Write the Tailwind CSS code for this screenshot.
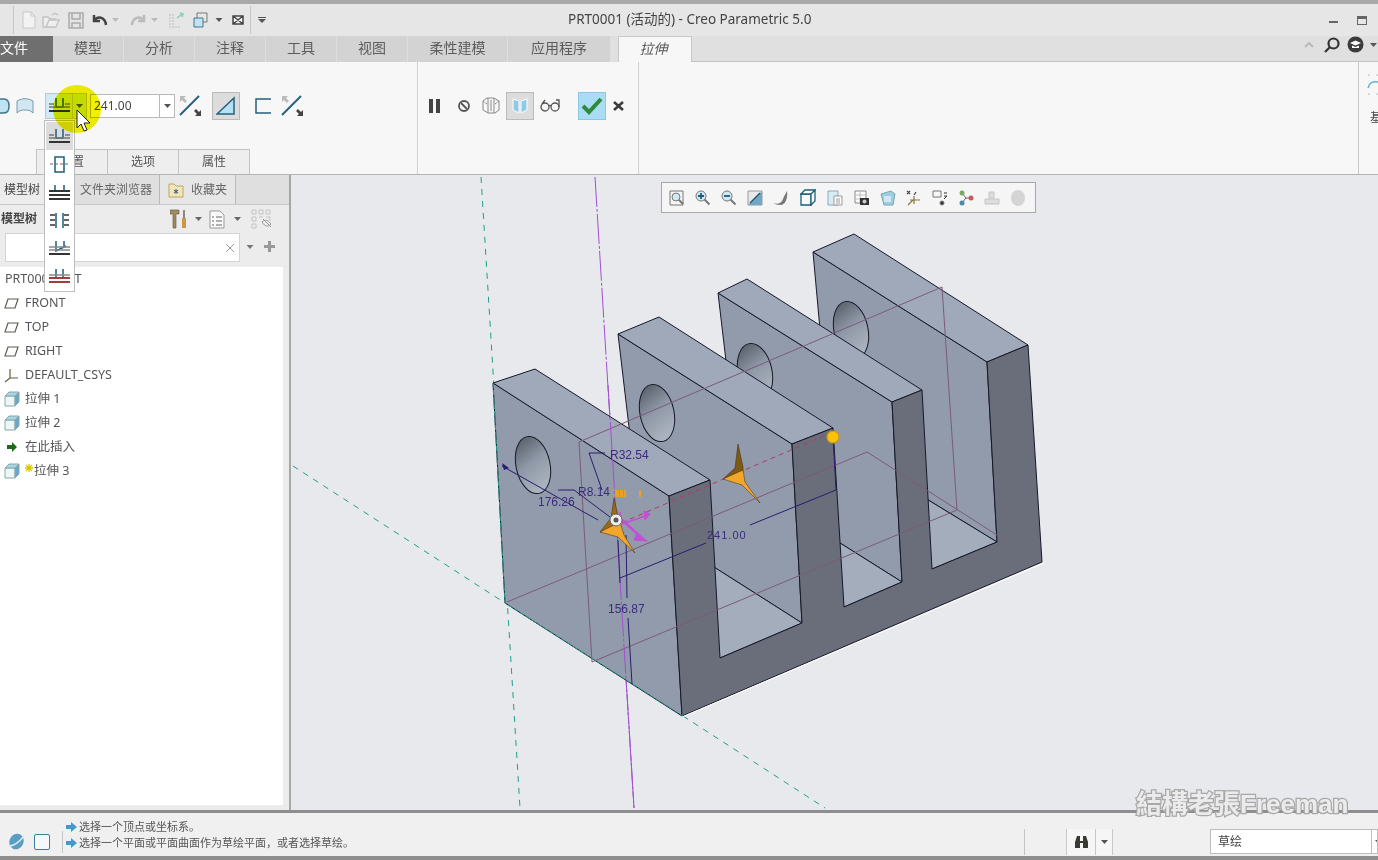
<!DOCTYPE html>
<html lang="zh-CN">
<head>
<meta charset="UTF-8">
<title>PRT0001 (活动的) - Creo Parametric 5.0</title>
<script src="https://cdn.jsdelivr.net/npm/@tailwindcss/browser@4"></script>
</head>
<body class="relative w-[1378px] h-[860px] overflow-hidden flex flex-col bg-[#e8e9ed] text-[#555] font-['Noto_Sans','Noto_Sans_CJK_SC',sans-serif]">

  <!-- top band -->
  <div class="h-1 bg-[#a9a9a9]"></div>

  <!-- title bar -->
  <div class="h-8 flex items-center bg-[#e6e6e6]">
    <div class="w-[568px] flex items-center">
      <div class="ml-[13px] w-px h-7 bg-[#c4c4c4]"></div>
      <svg class="ml-[8px] w-[14px] h-[18px]" viewBox="0 0 14 18" fill="#f2f2f2" stroke="#c8c8c8"><path d="M1 1h8l4 4v12H1z"/><path d="M9 1v4h4" fill="none"/></svg>
      <svg class="ml-[6px] w-[18px] h-[16px]" viewBox="0 0 18 16" fill="#eee" stroke="#c4c4c4" stroke-width="1.5"><path d="M1 15V5h5l2 2h5v8z"/><path d="M4 15l3-7h10l-3 7z"/><path d="M10 3c2-2 4-2 6 0" fill="none"/></svg>
      <svg class="ml-[8px] w-[16px] h-[17px]" viewBox="0 0 16 17" fill="#e4e4e4" stroke="#aaa" stroke-width="1.5"><path d="M1 1h14v15H1z"/><path d="M4 1v6h8V1M4 16v-5h8v5" fill="none"/></svg>
      <svg class="ml-[7px] w-[17px] h-[13px]" viewBox="0 0 17 13" fill="none" stroke="#444" stroke-width="2.5"><path d="M3 1v6h6"/><path d="M3 7c3-5 11-5 12 4"/></svg>
      <svg class="ml-[4px] w-[7px] h-[4px]" viewBox="0 0 7 4" fill="#bbb"><path d="M0 0h7L3.500 4z"/></svg>
      <svg class="ml-[11px] w-[17px] h-[13px]" viewBox="0 0 17 13" fill="none" stroke="#bbb" stroke-width="2.5"><path d="M14 1v6H8"/><path d="M14 7C11 2 3 2 2 11"/></svg>
      <svg class="ml-[4px] w-[7px] h-[4px]" viewBox="0 0 7 4" fill="#bbb"><path d="M0 0h7L3.500 4z"/></svg>
      <svg class="ml-[10px] w-[16px] h-[16px]" viewBox="0 0 16 16" stroke="#bbb" fill="none"><path d="M1 3h6M1 6h6M1 9h6M1 12h6M1 15h12" stroke-dasharray="2 1"/><path d="M9 6l5-4M12 1l3 1-1 3" stroke="#8cb" stroke-width="1.500"/></svg>
      <svg class="ml-[9px] w-[16px] h-[16px]" viewBox="0 0 16 16" fill="none" stroke="#777"><path d="M4 1h10v9H4z"/><path d="M1 6h9v9H1z" fill="#bfe3f2" stroke="#44748c"/></svg>
      <svg class="ml-[6px] w-[8px] h-[4px]" viewBox="0 0 7 4" fill="#555"><path d="M0 0h7L3.500 4z"/></svg>
      <svg class="ml-[9px] w-[12px] h-[10px]" viewBox="0 0 12 10" fill="#f5f5f5" stroke="#444" stroke-width="1.500"><path d="M1 1h10v8H1zM1 1l10 8M11 1L1 9"/></svg>
      <div class="ml-[6px] w-px h-7 bg-[#c4c4c4]"></div>
      <svg class="ml-[7px] w-[8px] h-[6px]" viewBox="0 0 8 6" fill="#555"><path d="M0 0h8v1H0zM0 2h8L4 6z"/></svg>
    </div>
    <div class="text-[13.5px] text-[#444] pb-[2px]">PRT0001 (活动的) - Creo Parametric 5.0</div>
    <div class="flex-1"></div>
    <div class="w-[9px] h-[2px] bg-[#666] mt-[4px]"></div>
    <div class="ml-[19px] mr-[11px] w-[10px] h-[9px] border border-[#666] border-t-[3px]"></div>
  </div>

  <!-- tabs -->
  <div class="h-[26px] flex items-stretch bg-[#e0e0e0] text-[14px] text-[#5c5c5c]">
    <div class="w-[53px] bg-[#6f6f6f] text-white flex items-center pb-[3px] overflow-hidden"><span>文件</span></div>
    <div class="w-[71px] bg-[#d3d3d3] border-r border-[#dedede] flex items-center justify-center pb-[3px]">模型</div>
    <div class="w-[71px] bg-[#d3d3d3] border-r border-[#dedede] flex items-center justify-center pb-[3px]">分析</div>
    <div class="w-[71px] bg-[#d3d3d3] border-r border-[#dedede] flex items-center justify-center pb-[3px]">注释</div>
    <div class="w-[71px] bg-[#d3d3d3] border-r border-[#dedede] flex items-center justify-center pb-[3px]">工具</div>
    <div class="w-[71px] bg-[#d3d3d3] border-r border-[#dedede] flex items-center justify-center pb-[3px]">视图</div>
    <div class="w-[100px] bg-[#d3d3d3] border-r border-[#dedede] flex items-center justify-center pb-[3px]">柔性建模</div>
    <div class="w-[102px] bg-[#d3d3d3] flex items-center justify-center pb-[3px]">应用程序</div>
    <div class="ml-[8px] w-[74px] bg-[#f7f7f7] border-t border-x border-[#c8c8c8] flex items-center justify-center italic pb-[3px] pr-[3px]">拉伸</div>
    <div class="flex-1 flex items-center justify-end border-b border-[#c4c4c4] pb-[8px]">
      <svg class="w-[10px] h-[7px]" viewBox="0 0 10 7" fill="none" stroke="#bbb" stroke-width="2"><path d="M1 6l4-4 4 4"/></svg>
      <svg class="ml-[10px] w-[16px] h-[16px]" viewBox="0 0 16 16" fill="none" stroke="#333" stroke-width="2.200"><circle cx="9.500" cy="6.500" r="5"/><path d="M6 10l-5 5"/></svg>
      <svg class="ml-[7px] w-[17px] h-[17px]" viewBox="0 0 17 17"><circle cx="8.500" cy="8.500" r="8" fill="#3c3c3c"/><path d="M3 7l5.500-2.500L14 7l-5.500 2.500z" fill="#fff"/><path d="M5 9.500v2.500h7V9.500l-3.500 1.500z" fill="#fff"/></svg>
      <svg class="ml-[6px] mr-[1px] w-[7px] h-[4px]" viewBox="0 0 7 4" fill="#555"><path d="M0 0h7L3.500 4z"/></svg>
    </div>
  </div>

  <!-- ribbon -->
  <div class="h-[113px] flex bg-[#f7f7f7] border-b border-[#b4b4b4]">
    <div class="w-[418px] flex flex-col border-r border-[#d0d0d0]">
      <div class="h-[87px] flex items-center">
        <svg class="w-[10px] h-[18px]" viewBox="0 0 10 18" fill="#bfe3f2" stroke="#44748c" stroke-width="1.500"><path d="M-4 2h8c4 0 5 3 5 7s-1 7-5 7h-8z"/></svg>
        <svg class="ml-[6px] w-[18px] h-[16px]" viewBox="0 0 18 16" fill="#cfe8f4" stroke="#7c98a8"><path d="M1 3c5-3 11-3 16 0v12c-3-3-5-3-8-3s-5 0-8 3z"/></svg>
        <div class="ml-[11px] w-[42px] h-[26px] flex border border-[#c4c4c4] bg-[#cfeafa]">
          <div class="w-[26px] flex items-center justify-center">
            <svg class="w-[21px] h-[17px]" viewBox="0 0 21 17" fill="none" stroke-width="1.500"><path d="M7 1v9h7V1" stroke="#1d5f7a"/><path d="M0 7h5M16 7h5M0 10h21" stroke="#777"/><path d="M0 14h21" stroke="#333" stroke-width="2"/></svg>
          </div>
          <div class="flex-1 border-l border-[#c4c4c4] flex items-center justify-center">
            <svg class="w-[7px] h-[4px]" viewBox="0 0 7 4" fill="#555"><path d="M0 0h7L3.500 4z"/></svg>
          </div>
        </div>
        <div class="ml-[3px] w-[85px] h-[24px] flex border border-[#b9b9b9] bg-white text-[12px] text-[#444]">
          <div class="flex-1 pl-[3px] leading-[22px]">241.00</div>
          <div class="w-[15px] border-l border-[#b9b9b9] flex items-center justify-center">
            <svg class="w-[7px] h-[4px]" viewBox="0 0 7 4" fill="#555"><path d="M0 0h7L3.500 4z"/></svg>
          </div>
        </div>
        <svg class="ml-[4px] w-[23px] h-[22px]" viewBox="0 0 23 22" fill="none"><path d="M1 20L20 1" stroke="#2a5f7a" stroke-width="2"/><path d="M1 1h6l-2 2 3 3-2 2-3-3-2 2z" fill="#bbb"/><path d="M22 21h-6l2-2-3-3 2-2 3 3 2-2z" fill="#444"/></svg>
        <div class="ml-[10px] w-[28px] h-[28px] bg-[#dcdcdc] border border-[#bbb] flex items-center justify-center">
          <svg class="w-[20px] h-[19px]" viewBox="0 0 20 19"><path d="M1 18L18 2v16z" fill="#b5e2f6" stroke="#2a5f7a" stroke-width="1.500"/></svg>
        </div>
        <svg class="ml-[15px] w-[16px] h-[16px]" viewBox="0 0 16 16" fill="none" stroke="#2a5f7a" stroke-width="1.500"><path d="M16 1H1v14h15"/></svg>
        <svg class="ml-[10px] w-[23px] h-[22px]" viewBox="0 0 23 22" fill="none"><path d="M1 20L20 1" stroke="#2a5f7a" stroke-width="2"/><path d="M1 1h6l-2 2 3 3-2 2-3-3-2 2z" fill="#bbb"/><path d="M22 21h-6l2-2-3-3 2-2 3 3 2-2z" fill="#444"/></svg>
      </div>
      <div class="h-[25px] flex ml-[36px] text-[12px] text-[#555]">
        <div class="w-[72px] border border-b-0 border-[#c4c4c4] bg-[#eeeeee] flex items-center justify-center">放置</div>
        <div class="w-[71px] border-t border-r border-[#c4c4c4] bg-[#eeeeee] flex items-center justify-center">选项</div>
        <div class="w-[71px] border-t border-r border-[#c4c4c4] bg-[#eeeeee] flex items-center justify-center">属性</div>
      </div>
    </div>
    <div class="w-[220px] h-[87px] flex items-center border-r border-[#d0d0d0] box-content pb-[25px]">
      <svg class="ml-[10px] w-[13px] h-[14px]" viewBox="0 0 13 14" fill="#444"><path d="M1 0h4v14H1zM8 0h4v14H8z"/></svg>
      <svg class="ml-[17px] w-[12px] h-[12px]" viewBox="0 0 12 12" fill="none" stroke="#555" stroke-width="1.800"><circle cx="6" cy="6" r="5"/><path d="M3 3l6 6"/></svg>
      <svg class="ml-[12px] w-[18px] h-[17px]" viewBox="0 0 18 17" fill="none" stroke="#888"><path d="M1 4l4-3h7l5 3v9l-4 3H6l-5-3z"/><path d="M6 1v15M12 1v15M9 3v11"/><path d="M1 4l4 3M17 4l-4 3" stroke-dasharray="2 1"/></svg>
      <div class="ml-[6px] w-[28px] h-[28px] bg-[#dcdcdc] border border-[#bbb] flex items-center justify-center">
        <svg class="w-[16px] h-[17px]" viewBox="0 0 16 17" fill="#8fcbe8" stroke="#fff"><path d="M1 2l6 2v12l-6-3zM15 2L9 4v12l6-3z"/></svg>
      </div>
      <svg class="ml-[6px] w-[20px] h-[13px]" viewBox="0 0 20 13" fill="none" stroke="#555" stroke-width="1.300"><circle cx="5" cy="8" r="4"/><circle cx="15" cy="8" r="4"/><path d="M9 7c1-1 1-1 2 0M2 5l3-4M19 8V1h-3"/></svg>
      <div class="ml-[18px] w-[28px] h-[28px] bg-[#a9dcf5] border border-[#8cc8e6] flex items-center justify-center">
        <svg class="w-[22px] h-[18px]" viewBox="0 0 22 18" fill="none" stroke="#2f8a3a" stroke-width="4"><path d="M2 9l6 6L20 2"/></svg>
      </div>
      <svg class="ml-[7px] w-[11px] h-[10px]" viewBox="0 0 11 10" fill="none" stroke="#3a3a3a" stroke-width="2.500"><path d="M1 1l9 8M10 1L1 9"/></svg>
    </div>
    <div class="w-[720px] border-r border-[#c8c8c8]"></div>
    <div class="flex-1 flex flex-col overflow-hidden">
      <svg class="mt-[10px] ml-[8px] w-[12px] h-[26px]" viewBox="0 0 12 26" fill="none"><path d="M1 16c1-5 5-7 10-6" stroke="#59b0d8" stroke-width="1.500"/><path d="M2 3h.01M10 3h.01M2 22h.01M10 22h.01" stroke="#777" stroke-width="1.200" stroke-linecap="round"/></svg>
      <div class="ml-[11px] mt-[11px] text-[12px] text-[#444] whitespace-nowrap">基</div>
    </div>
  </div>

  <!-- main -->
  <div class="h-[635px] flex">
    <!-- left panel -->
    <div class="w-[291px] flex flex-col bg-[#ececec] border-r-2 border-[#a6a6a6]">
      <div class="h-[30px] flex text-[12px] bg-[#dfdfdf] border-b border-[#c8c8c8]">
        <div class="w-[44px] bg-[#ececec] pl-1 flex items-center text-[#444] whitespace-nowrap">模型树</div>
        <div class="w-[116px] pl-[36px] border-r border-[#b9b9b9] flex items-center text-[#666] whitespace-nowrap">文件夹浏览器</div>
        <div class="w-[76px] pl-[8px] border-r border-[#b9b9b9] flex items-center text-[#666] bg-[#e6e6e6]">
          <svg class="w-[16px] h-[16px]" viewBox="0 0 16 16"><path d="M1 2h5l2 2h7v11H1z" fill="#f5e6b8" stroke="#b9a56a"/><path d="M8 7v5M5.800 8.200l4.400 2.600M10.200 8.200l-4.400 2.600" stroke="#2a5f7a"/></svg>
          <span class="ml-[7px] whitespace-nowrap">收藏夹</span>
        </div>
      </div>
      <div class="h-[28px] flex items-center">
        <div class="w-[170px] pl-px text-[12px] font-bold text-[#444]">模型树</div>
        <svg class="w-[17px] h-[20px]" viewBox="0 0 17 20"><path d="M0 1h9v4H6v14H3V5H0z" fill="#a58b5a" stroke="#555" stroke-width=".6"/><path d="M14 1v8" stroke="#666" stroke-width="1.500"/><path d="M12 9h4v10h-4z" fill="#c99a45"/></svg>
        <svg class="ml-[8px] w-[7px] h-[4px]" viewBox="0 0 7 4" fill="#666"><path d="M0 0h7L3.500 4z"/></svg>
        <svg class="ml-[7px] w-[16px] h-[19px]" viewBox="0 0 16 19" fill="#fafafa" stroke="#999"><path d="M1 1h10l4 4v13H1z"/><path d="M7 7h6M7 11h6M7 15h6M3 7h2M3 11h2M3 15h2" stroke="#666"/></svg>
        <svg class="ml-[9px] w-[7px] h-[4px]" viewBox="0 0 7 4" fill="#666"><path d="M0 0h7L3.500 4z"/></svg>
        <svg class="ml-[10px] w-[21px] h-[20px]" viewBox="0 0 21 20" fill="none" stroke="#c4c4c4"><path d="M1 1h4v4H1zM1 8h4v4H1zM1 15h4v4H1zM8 1h4v4H8zM15 1h4v4h-4zM8 8h4M15 8h4v4"/><path d="M11 13c3-3 6-2 9 2-3 3-6 3-9-2zM12 10l8 8" stroke="#999"/></svg>
      </div>
      <div class="h-[29px] flex items-center">
        <div class="ml-[5px] w-[235px] h-[29px] bg-white border border-[#d4d4d4] flex items-center justify-end pr-[5px]">
          <svg class="w-[8px] h-[8px]" viewBox="0 0 8 8" fill="none" stroke="#999"><path d="M0 0l8 8M8 0L0 8"/></svg>
        </div>
        <svg class="ml-[6px] mb-[2px] w-[8px] h-[4px]" viewBox="0 0 7 4" fill="#777"><path d="M0 0h7L3.500 4z"/></svg>
        <svg class="ml-[10px] mb-[2px] w-[11px] h-[11px]" viewBox="0 0 11 11" fill="#999"><path d="M4 0h3v4h4v3H7v4H4V7H0V4h4z"/></svg>
      </div>
      <div class="mt-[5px] h-[538px] w-[283px] bg-white text-[12.5px] text-[#555]">
        <div class="h-6 flex items-center pl-[5px]">PRT0001.PRT</div>
        <div class="h-6 flex items-center pl-1">
          <svg class="w-[15px] h-[11px]" viewBox="0 0 15 11" fill="none" stroke="#5c5c50" stroke-width="1.200"><path d="M4 1h10l-3 9H1z"/></svg>
          <span class="ml-[6px]">FRONT</span>
        </div>
        <div class="h-6 flex items-center pl-1">
          <svg class="w-[15px] h-[11px]" viewBox="0 0 15 11" fill="none" stroke="#5c5c50" stroke-width="1.200"><path d="M4 1h10l-3 9H1z"/></svg>
          <span class="ml-[6px]">TOP</span>
        </div>
        <div class="h-6 flex items-center pl-1">
          <svg class="w-[15px] h-[11px]" viewBox="0 0 15 11" fill="none" stroke="#5c5c50" stroke-width="1.200"><path d="M4 1h10l-3 9H1z"/></svg>
          <span class="ml-[6px]">RIGHT</span>
        </div>
        <div class="h-6 flex items-center pl-1">
          <svg class="w-[15px] h-[15px]" viewBox="0 0 15 15" fill="none" stroke="#6a5a3c" stroke-width="1.200"><path d="M6 1v9l8-0M6 10l-5 4"/></svg>
          <span class="ml-[6px]">DEFAULT_CSYS</span>
        </div>
        <div class="h-6 flex items-center pl-1">
          <svg class="w-[16px] h-[16px]" viewBox="0 0 16 16"><path d="M1 5h10v10H1z" fill="#eef6fa" stroke="#8aa"/><path d="M1 5l4-4h10l-4 4z" fill="#a9d4e8" stroke="#8aa"/><path d="M11 5l4-4v10l-4 4z" fill="#6ba8c6" stroke="#8aa"/></svg>
          <span class="ml-[5px]">拉伸 1</span>
        </div>
        <div class="h-6 flex items-center pl-1">
          <svg class="w-[16px] h-[16px]" viewBox="0 0 16 16"><path d="M1 5h10v10H1z" fill="#eef6fa" stroke="#8aa"/><path d="M1 5l4-4h10l-4 4z" fill="#a9d4e8" stroke="#8aa"/><path d="M11 5l4-4v10l-4 4z" fill="#6ba8c6" stroke="#8aa"/></svg>
          <span class="ml-[5px]">拉伸 2</span>
        </div>
        <div class="h-6 flex items-center pl-[7px]">
          <svg class="w-[10px] h-[10px]" viewBox="0 0 10 10" fill="#1f6a1a"><path d="M0 3h5V0l5 5-5 5V7H0z"/></svg>
          <span class="ml-[8px]">在此插入</span>
        </div>
        <div class="h-6 flex items-center pl-1">
          <svg class="w-[16px] h-[16px]" viewBox="0 0 16 16"><path d="M1 5h10v10H1z" fill="#eef6fa" stroke="#8aa"/><path d="M1 5l4-4h10l-4 4z" fill="#a9d4e8" stroke="#8aa"/><path d="M11 5l4-4v10l-4 4z" fill="#6ba8c6" stroke="#8aa"/></svg>
          <svg class="ml-[5px] mb-[6px] w-[8px] h-[8px]" viewBox="0 0 8 8" stroke="#d8c800" stroke-width="1.300"><path d="M4 0v8M0 4h8M1 1l6 6M7 1L1 7"/></svg>
          <span class="ml-[1px]">拉伸 3</span>
        </div>
      </div>
    </div>

    <!-- graphics area -->
    <div class="relative flex-1 bg-[#e8e9ed]">
      <svg class="absolute inset-0 w-full h-full" viewBox="291 175 1087 635" font-family="Liberation Sans, sans-serif">
        <defs>
          <linearGradient id="hole" x1="0" y1="0" x2="0.300" y2="1">
            <stop offset="0" stop-color="#4f5661"/>
            <stop offset="0.550" stop-color="#8f98a6"/>
            <stop offset="1" stop-color="#aab2bf"/>
          </linearGradient>
        </defs>

        <!-- datum axes behind the part -->
        <g fill="none" stroke="#1f9f8a" stroke-width="1" stroke-dasharray="6 6">
          <path d="M481 177L520 808"/>
          <path d="M293 466L505 603"/>
          <path d="M683 716L825 808"/>
        </g>
        <path d="M595 177L634 808" fill="none" stroke="#a050d0" stroke-width="1" stroke-dasharray="30 2 3 2"/>

        <!-- plate 4 -->
        <g stroke="#16182a" stroke-width="1" stroke-linejoin="round">
          <path d="M813 252L987 362L997 542L830 440z" fill="#929bab"/>
          <path d="M830 440L997 542L932 569L800 500z" fill="#a4adbc"/>
          <ellipse cx="851" cy="330" rx="17" ry="29" fill="url(#hole)" transform="rotate(-12 851 330)"/>
          <path d="M813 252L854 234L1028 345L987 362z" fill="#a0a9b9"/>
          <!-- plate 3 -->
          <path d="M718 293L892 402L902 582L740 480z" fill="#929bab"/>
          <path d="M740 480L902 582L844 607L720 530z" fill="#a4adbc"/>
          <ellipse cx="755" cy="372" rx="17" ry="29" fill="url(#hole)" transform="rotate(-12 755 372)"/>
          <path d="M718 293L747 279L922 390L892 402z" fill="#a0a9b9"/>
          <!-- plate 2 -->
          <path d="M618 334L792 444L802 623L640 520z" fill="#929bab"/>
          <path d="M640 520L802 623L720 658L620 600z" fill="#a4adbc"/>
          <ellipse cx="657" cy="413" rx="17" ry="29" fill="url(#hole)" transform="rotate(-12 657 413)"/>
          <path d="M618 334L659 317L833 428L792 444z" fill="#a0a9b9"/>
          <!-- plate 1 -->
          <path d="M493 383L669 496L682 716L505 603z" fill="#929bab"/>
          <ellipse cx="533" cy="465" rx="17" ry="29" fill="url(#hole)" transform="rotate(-12 533 465)"/>
          <path d="M493 383L535 369L710 480L669 496z" fill="#a0a9b9"/>
          <!-- dark u profile -->
          <path d="M669 496L710 480L720 658L802 623L792 444L833 428L844 607L902 582L892 402L922 390L932 569L997 542L987 362L1028 345L1042 562L682 716z" fill="#6a6e7b"/>
        </g>
        <path d="M682 717L1044 563" stroke="#fff" stroke-width="1"/>

        <!-- sketch plane outline -->
        <g fill="none" stroke="#7c5a78" stroke-width="1">
          <path d="M942 287L579 442L592 662L957 510z"/>
          <path d="M507 602L867 452L997 535"/>
        </g>

        <!-- edges of datum on the part -->
        <path d="M493 383L505 603L683 716" fill="none" stroke="#1f9f8a" stroke-width="1" stroke-dasharray="5 2"/>
        <path d="M608 385L634 808" fill="none" stroke="#a050d0" stroke-width="1" stroke-dasharray="30 2 3 2"/>
        <path d="M833 432L600 532" fill="none" stroke="#b23a62" stroke-width="1" stroke-dasharray="5 4"/>

        <!-- dimensions -->
        <g fill="none" stroke="#2a1c70" stroke-width="1">
          <path d="M833 437L836 490"/>
          <path d="M836 490L750 525"/>
          <path d="M706 543L620 578"/>
          <path d="M618 540L620 583"/>
          <path d="M626 535L627 598"/>
          <path d="M628 618L632 684"/>
          <path d="M502 466L598 520"/>
          <path d="M589 453h16M589 453L602 490"/>
          <path d="M558 490h16M574 490L610 517"/>
        </g>
        <path d="M502 463L509 468L504 470z" fill="#2a1c70"/>
        <g fill="#3a2a80" font-size="12">
          <text x="610" y="459">R32.54</text>
          <text x="578" y="496">R8.14</text>
          <text x="538" y="506">176.26</text>
          <text x="707" y="539" font-size="11" letter-spacing="1">241.00</text>
          <text x="608" y="613">156.87</text>
        </g>
        <g fill="#f0a020">
          <path d="M615 490h4v7h-4zM620 490h3v7h-3zM624 490h2v7h-2zM639 490h2v7h-2z"/>
        </g>

        <!-- drag point -->
        <circle cx="833" cy="437" r="6" fill="#fcc20a" stroke="#c79a1e" stroke-width="1.200"/>

        <!-- coordinate stars -->
        <g stroke="#3a2a10" stroke-width=".5">
          <path d="M738 444L735 468L723 479L743 472L743 467z" fill="#7c5a16"/>
          <path d="M723 479L743 470L745 482L760 503L742 485z" fill="#f2a62a"/>
          <path d="M614 498L611 518L600 532L620 524L618 516z" fill="#9a6a18"/>
          <path d="M600 532L620 522L624 535L635 553L618 537z" fill="#f2a62a"/>
        </g>
        <g stroke="#c24fd6" fill="#c24fd6">
          <path d="M622 524L648 515" stroke-width="1.500"/>
          <path d="M644 511L650 514L645 520z"/>
          <path d="M622 520L642 538" stroke-width="2.500"/>
          <path d="M637 533L647 541L634 540z"/>
          <path d="M620 512L622 522" stroke-width="1.500"/>
        </g>
        <circle cx="616" cy="520" r="6" fill="#eeeeee" stroke="#666"/>
        <circle cx="616" cy="520" r="2.500" fill="#555"/>
      </svg>

      <!-- view toolbar -->
      <div class="absolute left-[370px] top-[7px] w-[375px] h-[31px] bg-[#f5f5f5] border border-[#a8a8a8] flex items-center pl-[7px] gap-[10px]">
        <svg class="w-[16px] h-[16px]" viewBox="0 0 16 16" fill="none" stroke="#777"><path d="M1 1h13v14H1z"/><circle cx="7" cy="7" r="4" fill="#cfe8f4"/><path d="M10 10l4 4" stroke-width="2"/></svg>
        <svg class="w-[16px] h-[16px]" viewBox="0 0 16 16" fill="none" stroke="#777"><circle cx="6" cy="6" r="5" fill="#cfe8f4"/><path d="M9.500 9.500l5 5" stroke-width="2"/><path d="M3 6h6M6 3v6" stroke="#1d5f7a" stroke-width="1.800"/></svg>
        <svg class="w-[16px] h-[16px]" viewBox="0 0 16 16" fill="none" stroke="#777"><circle cx="6" cy="6" r="5" fill="#cfe8f4"/><path d="M9.500 9.500l5 5" stroke-width="2"/><path d="M3 6h6" stroke="#1d5f7a" stroke-width="1.800"/></svg>
        <svg class="w-[16px] h-[16px]" viewBox="0 0 16 16"><path d="M1 1h14v14H1z" fill="#e8e8e8" stroke="#999"/><path d="M1 15L15 1v14z" fill="#6ea9c6"/><path d="M3 13L13 3" stroke="#1d4f6a" stroke-width="1.300"/></svg>
        <svg class="w-[16px] h-[16px]" viewBox="0 0 16 16"><path d="M1 13c5 2 8-1 9-4s3-6 4-8c1 6-1 14-7 14-3 0-5-1-6-2z" fill="#777"/></svg>
        <svg class="ml-px w-[16px] h-[17px]" viewBox="0 0 16 17" fill="#fafafa" stroke="#1d5f7a" stroke-width="1.300"><path d="M1 5h10v11H1z"/><path d="M1 5l4-4h10l-4 4zM11 5l4-4v11l-4 4z"/></svg>
        <svg class="ml-px w-[16px] h-[16px]" viewBox="0 0 16 16" stroke="#8ab"><path d="M1 1h10v14H1z" fill="#d8ecf5"/><path d="M7 6h8v9H7z" fill="#fff" stroke="#999"/><path d="M9 9h4M9 11h4M9 13h4" stroke="#999"/></svg>
        <svg class="ml-px w-[16px] h-[16px]" viewBox="0 0 16 16"><path d="M1 1h11v12H1z" fill="#fff" stroke="#888"/><path d="M1 5h11M1 9h11M6 1v12" stroke="#bbb"/><path d="M6 8h9v7H6z" fill="#333"/><circle cx="10.500" cy="11.500" r="2" fill="#ccc"/></svg>
        <svg class="w-[16px] h-[16px]" viewBox="0 0 16 16"><path d="M1 4l10-3 4 3-2 11-9 0z" fill="#9ccde4" stroke="#7aa"/><path d="M4 6h7v6H4z" fill="#cfe8f4"/></svg>
        <svg class="w-[16px] h-[16px]" viewBox="0 0 16 16" fill="none" stroke="#8a7a3c" stroke-width="1.200"><path d="M8 6v8M4 10h10M2 15l5-5"/><path d="M1 1l3 3M4 1L1 4M10 2l-2 3" stroke="#444"/></svg>
        <svg class="w-[16px] h-[16px]" viewBox="0 0 16 16" fill="none" stroke="#777"><path d="M1 1h8v6H1z"/><path d="M12 3h3M12 6h3L12 9" stroke="#333"/><circle cx="10" cy="13" r="2" fill="#333"/></svg>
        <svg class="w-[16px] h-[16px]" viewBox="0 0 16 16"><path d="M4 3l4 5-4 5M8 8h5" stroke="#666" fill="none"/><circle cx="4" cy="3" r="2.500" fill="#7aa860"/><circle cx="13" cy="8" r="2.500" fill="#c85a5a"/><circle cx="4" cy="13" r="2.500" fill="#4a8aac"/></svg>
        <svg class="w-[16px] h-[16px]" viewBox="0 0 16 16" fill="#ddd" stroke="#c4c4c4"><path d="M5 2h5v6H5zM1 9h14v5H1z"/></svg>
        <svg class="w-[16px] h-[16px]" viewBox="0 0 16 16"><ellipse cx="8" cy="8" rx="7" ry="8" fill="#d4d4d4"/></svg>
      </div>
    </div>
  </div>

  <!-- status bar -->
  <div class="h-[50px] flex flex-col border-t-[3px] border-[#8e8e8e] bg-[#f0f0f0]">
    <div class="h-[43px] flex items-center">
      <svg class="mt-[14px] ml-[8px] w-[17px] h-[17px]" viewBox="0 0 17 17"><ellipse cx="8.500" cy="8.500" rx="7" ry="8" fill="#5a9ec2" transform="rotate(25 8.500 8.500)"/><path d="M1 13c5 0 11-5 15-10" stroke="#dcecf4" stroke-width="1.500" fill="none"/></svg>
      <div class="mt-[14px] ml-[9px] w-[16px] h-[16px] bg-[#f4f8fb] border border-[#3e7c9c] rounded-[2px]"></div>
      <div class="mt-[14px] ml-[12px] w-px h-[22px] bg-[#c4c4c4]"></div>
      <div class="ml-[3px] w-[958px] text-[11px] leading-[16px] text-[#555] pt-[1px]">
        <div class="flex items-center">
          <svg class="w-[11px] h-[10px]" viewBox="0 0 11 10" fill="#3f9bcb"><path d="M0 3h5V0l6 5-6 5V7H0z"/></svg>
          <span class="ml-[2px]">选择一个顶点或坐标系。</span>
        </div>
        <div class="flex items-center">
          <svg class="w-[11px] h-[10px]" viewBox="0 0 11 10" fill="#3f9bcb"><path d="M0 3h5V0l6 5-6 5V7H0z"/></svg>
          <span class="ml-[2px]">选择一个平面或平面曲面作为草绘平面，或者选择草绘。</span>
        </div>
      </div>
      <div class="mt-[14px] w-px h-[26px] bg-[#c4c4c4]"></div>
      <div class="mt-[14px] ml-[41px] w-[47px] h-[26px] flex bg-[#f6f6f6] border-x border-[#c8c8c8]">
        <div class="w-[28px] flex items-center justify-center">
          <svg class="w-[15px] h-[14px]" viewBox="0 0 15 14" fill="#3a3a34"><path d="M1 7l2-6h3v5h3V1h3l2 6v6H9V8H6v5H1z"/></svg>
        </div>
        <div class="flex-1 border-l border-[#c8c8c8] flex items-center justify-center">
          <svg class="w-[7px] h-[4px]" viewBox="0 0 7 4" fill="#555"><path d="M0 0h7L3.500 4z"/></svg>
        </div>
      </div>
      <div class="mt-[14px] ml-[97px] flex-1 min-w-0 h-[25px] bg-white border border-[#bdbdbd] flex items-center text-[12px] text-[#444]">
        <div class="w-[160px] shrink-0 pl-[7px]">草绘</div>
        <div class="flex-1 min-w-0 h-full border-l border-[#bdbdbd] flex items-center pl-[3px] overflow-hidden">
          <svg class="w-[7px] h-[4px] shrink-0" viewBox="0 0 7 4" fill="#555"><path d="M0 0h7L3.500 4z"/></svg>
        </div>
      </div>
    </div>
    <div class="flex-1 bg-[#8e8e8e]"></div>
  </div>

  <!-- watermark -->
  <div class="absolute left-[1136px] top-[787px] text-[26px] leading-[34px] font-bold whitespace-nowrap text-[#ebebeb] [-webkit-text-stroke:2.500px_#a8a8a8] [paint-order:stroke_fill] font-['Liberation_Sans','Noto_Sans_CJK_TC',sans-serif]">結構老張Freeman</div>

  <!-- open flyout from the depth button -->
  <div class="absolute left-[44px] top-[120px] w-[31px] h-[172px] bg-white border border-[#bdbdbd] flex flex-col items-center pt-px">
    <div class="w-[27px] h-[28px] bg-[#dcdcdc] flex items-center justify-center">
      <svg class="w-[21px] h-[17px]" viewBox="0 0 21 17" fill="none" stroke-width="1.500"><path d="M7 1v9h7V1" stroke="#1d5f7a"/><path d="M0 7h5M16 7h5M0 10h21" stroke="#777"/><path d="M0 14h21" stroke="#333" stroke-width="2"/></svg>
    </div>
    <div class="h-[28px] flex items-center justify-center">
      <svg class="w-[19px] h-[17px]" viewBox="0 0 19 17" fill="none"><path d="M5 1h9v15H5z" stroke="#1d5f7a" stroke-width="1.500"/><path d="M0 8h19" stroke="#666" stroke-dasharray="3 2"/></svg>
    </div>
    <div class="h-[28px] flex items-center justify-center">
      <svg class="w-[21px] h-[17px]" viewBox="0 0 21 17" fill="none"><path d="M6 1v5M15 1v5" stroke="#1d5f7a" stroke-width="1.500"/><path d="M0 7h21M0 11h21M0 15h21" stroke="#333" stroke-width="1.800"/></svg>
    </div>
    <div class="h-[28px] flex items-center justify-center">
      <svg class="w-[19px] h-[17px]" viewBox="0 0 19 17" fill="none" stroke-width="1.500"><path d="M6 1v15M13 1v15" stroke="#1d5f7a"/><path d="M0 3h5M0 8h5M0 13h5M14 3h5M14 8h5M14 13h5" stroke="#333"/></svg>
    </div>
    <div class="h-[28px] flex items-center justify-center">
      <svg class="w-[21px] h-[17px]" viewBox="0 0 21 17" fill="none" stroke-width="1.500"><path d="M7 1v10l10-5M15 1v5" stroke="#1d5f7a"/><path d="M0 7h21M0 10h21" stroke="#888"/><path d="M0 14h21" stroke="#333" stroke-width="2"/></svg>
    </div>
    <div class="h-[28px] flex items-center justify-center">
      <svg class="w-[21px] h-[17px]" viewBox="0 0 21 17" fill="none" stroke-width="1.500"><path d="M7 1v9M14 1v9" stroke="#1d5f7a"/><path d="M0 7h21" stroke="#888"/><path d="M0 10h21M0 14h21" stroke="#a33c3c" stroke-width="1.800"/></svg>
    </div>
  </div>

  <!-- recording highlight and pointer -->
  <div class="absolute left-[53px] top-[85px] w-[48px] h-[48px] rounded-full bg-[#f0f000] mix-blend-multiply"></div>
  <svg class="absolute left-[76px] top-[109px] w-[15px] h-[23px]" viewBox="0 0 15 23"><path d="M1 1v18l4-4 3 7 3-1-3-7h6z" fill="#fff" stroke="#222"/></svg>
</body>
</html>
